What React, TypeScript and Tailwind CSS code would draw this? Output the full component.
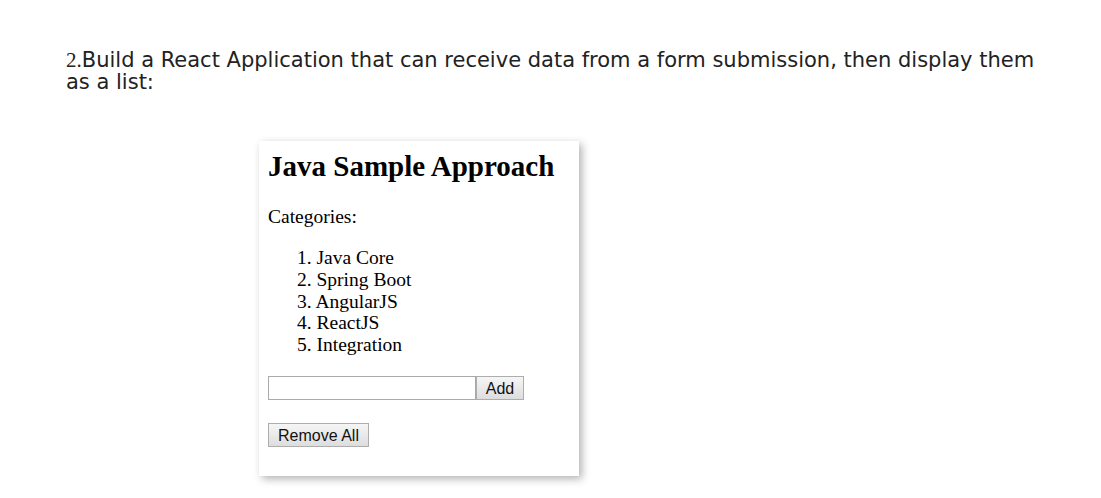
const categories = ["Java Core", "Spring Boot", "AngularJS", "ReactJS", "Integration"];

export default function App() {
  return (
    <div className="w-[1101px] h-[498px] bg-white overflow-hidden">
      <p className="pt-[49px] pl-[66px] w-[1060px] text-[21px] leading-[22px] text-[#222]" style={{ fontFamily: '"DejaVu Sans", Verdana, sans-serif' }}>
        <span style={{ fontFamily: '"Liberation Serif", serif' }}>2.</span>
        <span>Build a React Application that can receive data from a form submission, then display them</span>
        <br />
        <span>as a list:</span>
      </p>

      <div className="mt-[48px] ml-[259px] w-[320px] h-[335px] bg-white shadow-[3px_3px_8px_rgba(0,0,0,0.3)] pl-[9px] pt-[8px] text-black" style={{ fontFamily: '"Liberation Serif", "Times New Roman", serif' }}>
        <h1 className="text-[29px] font-bold leading-[34px]">Java Sample Approach</h1>
        <p className="mt-[23px] text-[19.5px] leading-[22px]">Categories:</p>
        <ol className="mt-[19px] pl-[29px] text-[19.5px] leading-[21.75px]">
          {categories.map((c, i) => (
            <li key={c}>
              {i + 1}. {c}
            </li>
          ))}
        </ol>
        <div className="mt-[20px] flex" style={{ fontFamily: '"Liberation Sans", Arial, sans-serif' }}>
          <input className="w-[208px] h-[24px] border border-[#a9a9a9] outline-none px-1 text-[14px]" />
          <button className="w-[48px] h-[24px] border border-[#adadad] bg-gradient-to-b from-[#f6f6f6] to-[#dddddd] text-[16px] text-[#111]">Add</button>
        </div>
        <button className="mt-[23px] w-[101px] h-[24px] border border-[#adadad] bg-gradient-to-b from-[#f6f6f6] to-[#dddddd] text-[16px] text-[#111]" style={{ fontFamily: '"Liberation Sans", Arial, sans-serif' }}>
          Remove All
        </button>
      </div>
    </div>
  );
}
